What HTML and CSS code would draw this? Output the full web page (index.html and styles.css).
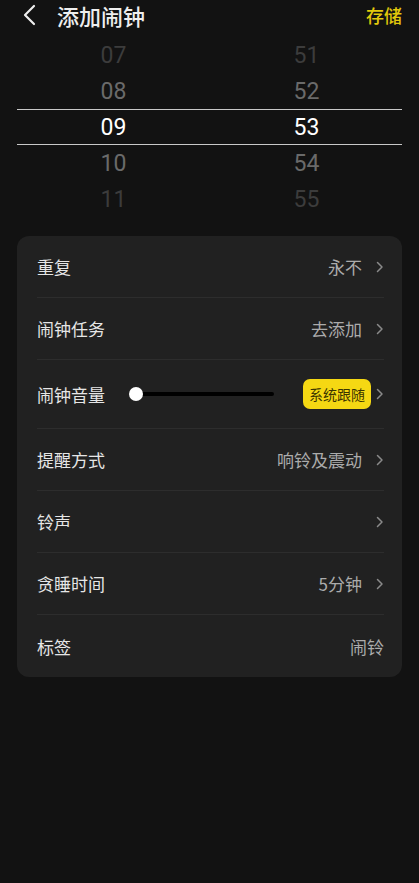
FILE: index.html
```html
<!DOCTYPE html>
<html lang="zh-CN">
<head>
  <meta charset="UTF-8">
  <title>添加闹钟</title>
  <meta name="viewport" content="width=device-width, initial-scale=1.0">
  <link rel="stylesheet" href="styles.css">
</head>
<body>
  <header class="topbar">
    <div class="topbar-left">
      <svg class="back" width="16" height="22" viewBox="0 0 16 22">
        <path d="M13 2 L4 11 L13 20" fill="none" stroke="#eee" stroke-width="2.2" stroke-linecap="round" stroke-linejoin="round"/>
      </svg>
      <h1>添加闹钟</h1>
    </div>
    <span class="save">存储</span>
  </header>

  <div class="picker">
    <div class="picker-row far"><span>07</span><span>51</span></div>
    <div class="picker-row near"><span>08</span><span>52</span></div>
    <div class="picker-row current"><span>09</span><span>53</span></div>
    <div class="picker-row near"><span>10</span><span>54</span></div>
    <div class="picker-row far"><span>11</span><span>55</span></div>
  </div>

  <main class="card">
    <div class="item">
      <span class="label">重复</span>
      <span class="value">永不</span>
      <svg class="chev" width="8" height="12" viewBox="0 0 8 12"><path d="M1.5 1.5 L6 6 L1.5 10.5" fill="none" stroke="#8a8a8a" stroke-width="1.5" stroke-linecap="round" stroke-linejoin="round"/></svg>
    </div>
    <div class="item">
      <span class="label">闹钟任务</span>
      <span class="value">去添加</span>
      <svg class="chev" width="8" height="12" viewBox="0 0 8 12"><path d="M1.5 1.5 L6 6 L1.5 10.5" fill="none" stroke="#8a8a8a" stroke-width="1.5" stroke-linecap="round" stroke-linejoin="round"/></svg>
    </div>
    <div class="item volume">
      <span class="label">闹钟音量</span>
      <div class="slider"><span class="thumb"></span></div>
      <span class="badge">系统跟随</span>
      <svg class="chev" width="8" height="12" viewBox="0 0 8 12"><path d="M1.5 1.5 L6 6 L1.5 10.5" fill="none" stroke="#8a8a8a" stroke-width="1.5" stroke-linecap="round" stroke-linejoin="round"/></svg>
    </div>
    <div class="item">
      <span class="label">提醒方式</span>
      <span class="value">响铃及震动</span>
      <svg class="chev" width="8" height="12" viewBox="0 0 8 12"><path d="M1.5 1.5 L6 6 L1.5 10.5" fill="none" stroke="#8a8a8a" stroke-width="1.5" stroke-linecap="round" stroke-linejoin="round"/></svg>
    </div>
    <div class="item">
      <span class="label">铃声</span>
      <span class="value"></span>
      <svg class="chev" width="8" height="12" viewBox="0 0 8 12"><path d="M1.5 1.5 L6 6 L1.5 10.5" fill="none" stroke="#8a8a8a" stroke-width="1.5" stroke-linecap="round" stroke-linejoin="round"/></svg>
    </div>
    <div class="item">
      <span class="label">贪睡时间</span>
      <span class="value">5分钟</span>
      <svg class="chev" width="8" height="12" viewBox="0 0 8 12"><path d="M1.5 1.5 L6 6 L1.5 10.5" fill="none" stroke="#8a8a8a" stroke-width="1.5" stroke-linecap="round" stroke-linejoin="round"/></svg>
    </div>
    <div class="item">
      <span class="label">标签</span>
      <span class="value">闹铃</span>
    </div>
  </main>
</body>
</html>
```

FILE: styles.css
```css
body {
  margin: 0;
  background: #121212;
  color: #e8e8e8;
  font-family: "Noto Sans CJK SC", "Noto Sans", sans-serif;
  height: 883px;
  overflow: hidden;
}

.topbar {
  height: 30px;
  display: flex;
  align-items: center;
  justify-content: space-between;
  padding: 0 17px 0 21px;
}

.topbar-left {
  display: flex;
  align-items: center;
}

.back {
  display: block;
}

.topbar h1 {
  margin: 0 0 0 20px;
  font-size: 22px;
  font-weight: 500;
  color: #eeeeee;
  line-height: 30px;
}

.save {
  color: #e3c90b;
  font-size: 18px;
  font-weight: 500;
}

.picker {
  margin: 7px 17px 0;
}

.picker-row {
  height: 36px;
  display: grid;
  grid-template-columns: 193px 193px;
  align-items: center;
  font-family: Roboto, "Noto Sans", sans-serif;
  font-size: 23px;
  box-sizing: border-box;
}

.picker-row span {
  text-align: center;
}

.far {
  color: #3c3c3c;
}

.near {
  color: #6a6a6a;
}

.current {
  color: #ffffff;
  border-top: 1px solid #c8c8c8;
  border-bottom: 1px solid #c8c8c8;
}

.card {
  margin: 19px 17px 0;
  background: #212121;
  border-radius: 12px;
  padding: 0 18px 0 20px;
}

.item {
  height: 62px;
  display: flex;
  align-items: center;
  border-bottom: 1px solid #2d2d2d;
  box-sizing: border-box;
  font-size: 17px;
}

.item:last-child {
  border-bottom: none;
}

.item.volume {
  height: 69px;
}

.label {
  color: #e6e6e6;
  flex-shrink: 0;
}

.value {
  margin-left: auto;
  color: #ababab;
}

.chev {
  margin-left: 14px;
  display: block;
}

.slider {
  position: relative;
  margin-left: 25px;
  width: 144px;
  height: 4px;
  background: #000;
  border-radius: 2px;
}

.thumb {
  position: absolute;
  left: -1px;
  top: -5px;
  width: 14px;
  height: 14px;
  border-radius: 50%;
  background: #fff;
}

.badge {
  margin-left: auto;
  background: #f5d813;
  color: #3a3400;
  font-size: 14px;
  height: 30px;
  line-height: 30px;
  padding: 0 6px;
  border-radius: 7px;
}

.volume .chev {
  margin-left: 5px;
}
```
